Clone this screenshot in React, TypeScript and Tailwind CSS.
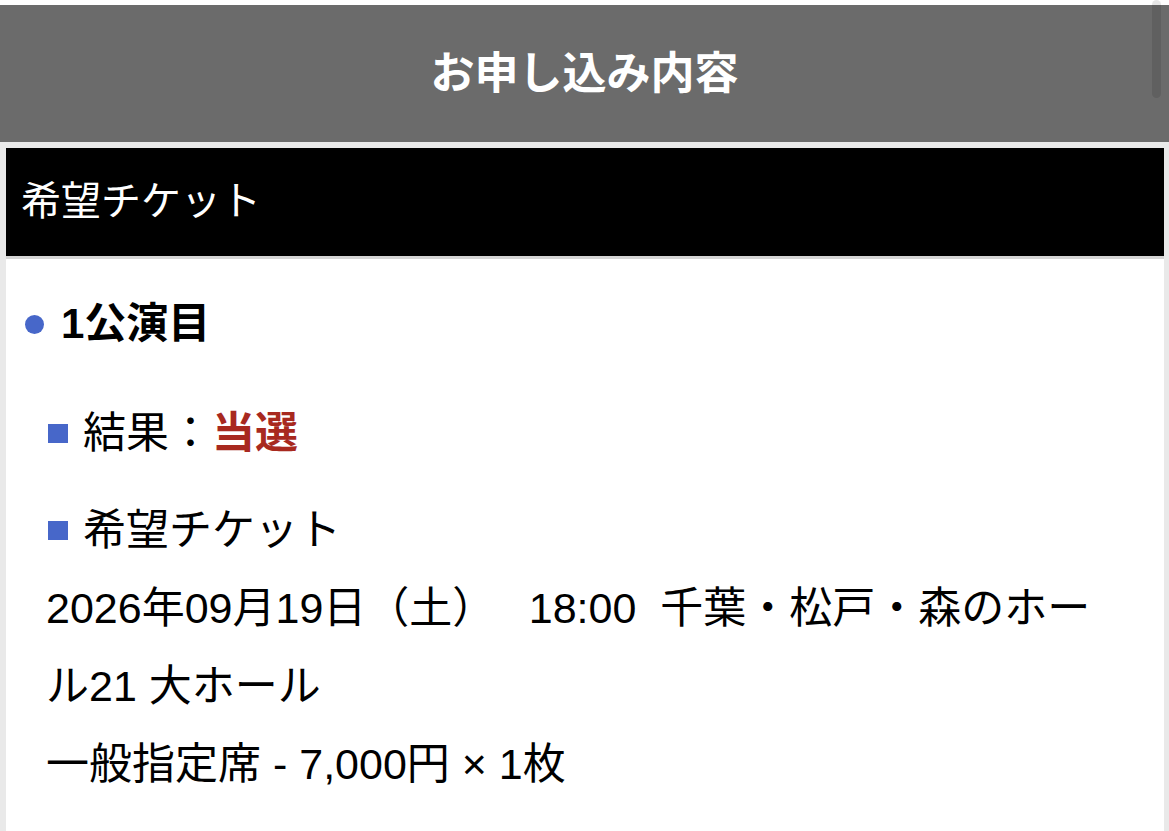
export default function App() {
  return (
    <div className="relative flex min-h-screen flex-col bg-white pt-[5px] font-['Liberation_Sans','Noto_Sans_CJK_JP',sans-serif] text-black">
      <header className="flex h-[137px] shrink-0 items-center justify-center bg-[#6b6b6b]">
        <h1 className="text-[44px] font-bold leading-none text-white">お申し込み内容</h1>
      </header>

      <div className="flex flex-1 flex-col bg-[#e9e9e9] pl-[6px] pr-[5px] pt-[6px]">
        <section className="flex flex-1 flex-col bg-white">
          <div className="flex h-[111px] items-center border-b-[3px] border-[#d5d5d5] bg-black pb-[3px] pl-[15px]">
            <h2 className="text-[40px] leading-none text-white">希望チケット</h2>
          </div>

          <div className="pl-[19px] pr-[50px] pt-[26px] text-[43px] leading-[78px]">
            <div className="flex items-center">
              <span className="mr-[17px] inline-block h-[19px] w-[19px] rounded-full bg-[#4767c9]" />
              <span className="text-[42px] font-bold">1公演目</span>
            </div>

            <div className="mt-[31px] flex items-center pl-[23px]">
              <span className="mr-[15px] inline-block h-[19px] w-[20px] bg-[#4767c9]" />
              <span>結果：</span>
              <span className="font-bold text-[#a8291f]">当選</span>
            </div>

            <div className="mt-[19px] pl-[21px]">
              <div className="flex items-center">
                <span className="ml-[2px] mr-[15px] inline-block h-[19px] w-[20px] bg-[#4767c9]" />
                <span>希望チケット</span>
              </div>
              <p>2026年09月19日（土）&#12288; 18:00&nbsp;&nbsp;千葉・松戸・森のホール21 大ホール</p>
              <p>一般指定席 - 7,000円 × 1枚</p>
            </div>
          </div>
        </section>
      </div>

      {/* overlay scrollbar */}
      <div className="absolute right-[8px] top-0 h-[98px] w-[9px] rounded-full bg-black/10" />
    </div>
  );
}
